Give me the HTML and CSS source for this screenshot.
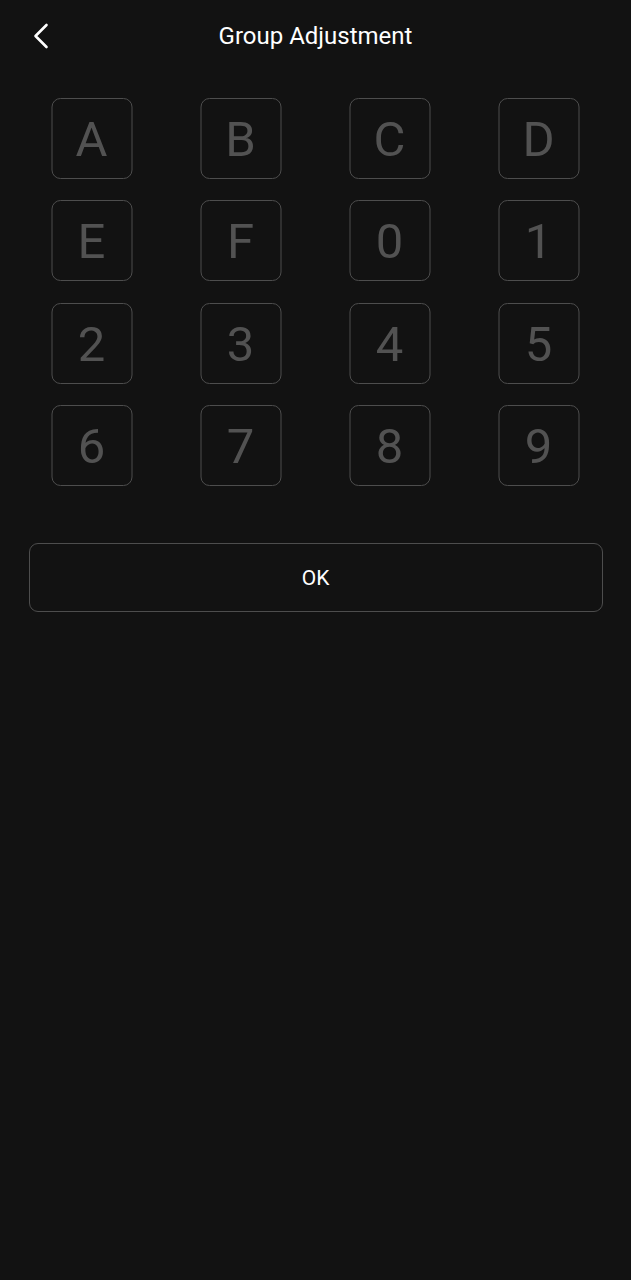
FILE: index.html
```html
<!DOCTYPE html>
<html lang="en">
<head>
<meta charset="utf-8">
<title>Group Adjustment</title>
<link rel="stylesheet" href="styles.css">
</head>
<body>
<div class="app">
  <header class="topbar">
    <button class="back" aria-label="Back">
      <svg width="16" height="26" viewBox="0 0 16 26"><path d="M13.5 2 L2.5 13 L13.5 24" fill="none" stroke="#ffffff" stroke-width="2.6" stroke-linecap="round" stroke-linejoin="round"/></svg>
    </button>
    <h1 class="title">Group Adjustment</h1>
  </header>
  <main class="content">
    <div class="keys">
      <div class="key">A</div><div class="key">B</div><div class="key">C</div><div class="key">D</div>
      <div class="key">E</div><div class="key">F</div><div class="key">0</div><div class="key">1</div>
      <div class="key">2</div><div class="key">3</div><div class="key">4</div><div class="key">5</div>
      <div class="key">6</div><div class="key">7</div><div class="key">8</div><div class="key">9</div>
    </div>
    <button class="ok">OK</button>
  </main>
</div>
</body>
</html>
```

FILE: styles.css
```css
html, body {
  margin: 0;
  padding: 0;
  background: #121212;
}
body {
  font-family: Roboto, "Liberation Sans", sans-serif;
  color: #ffffff;
  width: 631px;
  min-height: 1280px;
}
.app {
  display: flex;
  flex-direction: column;
}
.topbar {
  position: relative;
  height: 72px;
  display: flex;
  align-items: center;
  justify-content: center;
}
.back {
  position: absolute;
  left: 33px;
  top: 23px;
  width: 20px;
  height: 26px;
  padding: 0;
  border: none;
  background: none;
  display: flex;
  align-items: center;
}
.title {
  margin: 0;
  font-size: 24px;
  font-weight: 400;
  color: #ffffff;
}
.content {
  display: flex;
  flex-direction: column;
  align-items: center;
  padding-top: 26px;
}
.keys {
  display: grid;
  grid-template-columns: repeat(4, 81px);
  grid-auto-rows: 81px;
  column-gap: 68px;
  row-gap: 21.33px;
  transform: translateX(-0.5px);
}
.key {
  box-sizing: border-box;
  border: 1.3px solid #4d4d4d;
  border-radius: 9px;
  display: flex;
  align-items: center;
  justify-content: center;
  font-size: 49px;
  color: #525252;
  padding-top: 2px;
}
.ok {
  margin-top: 57px;
  width: 574px;
  height: 69px;
  box-sizing: border-box;
  border: 1.3px solid #4d4d4d;
  border-radius: 9px;
  background: transparent;
  color: #ffffff;
  font-family: Roboto, "Liberation Sans", sans-serif;
  font-size: 21px;
  padding: 2px 0 0;
}
```
